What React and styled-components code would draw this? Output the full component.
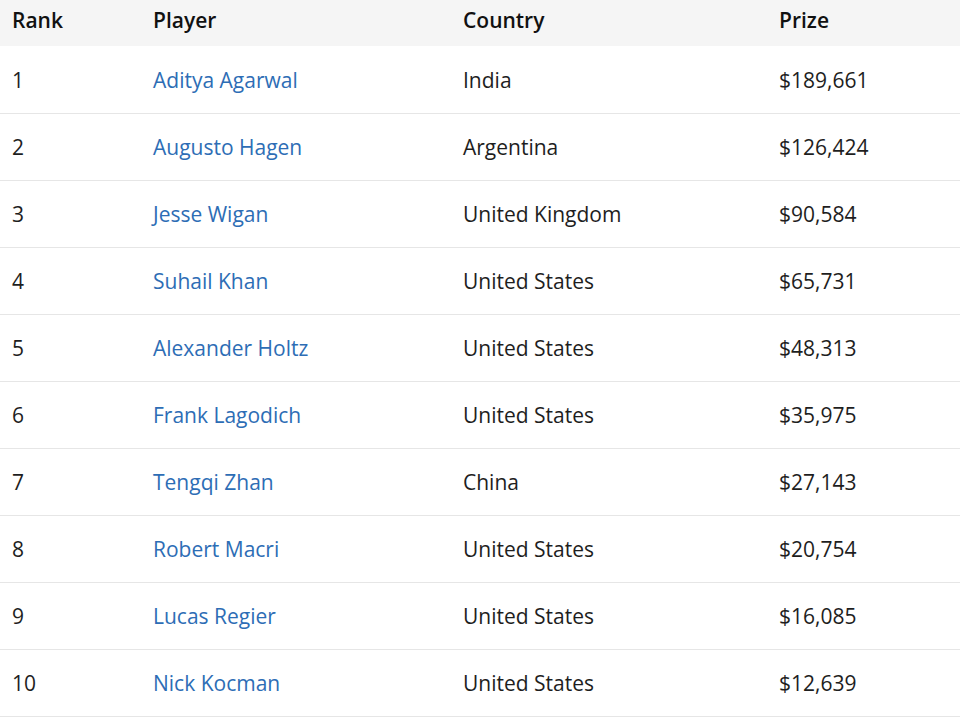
import React from "react";
import styled, { createGlobalStyle } from "styled-components";

const Global = createGlobalStyle`
  html, body { margin: 0; padding: 0; background: #fff; }
  body { font-family: "Open Sans", "Liberation Sans", sans-serif; }
`;

const Table = styled.table`
  width: 960px;
  border-collapse: collapse;
  table-layout: fixed;
  font-family: "Open Sans", "Liberation Sans", sans-serif;
  font-size: 21px;
  color: #1e1e1e;
`;

const Col = styled.col`
  width: ${(p) => p.$w}px;
`;

const HeadRow = styled.tr`
  background: #f5f5f5;
`;

const Th = styled.th`
  height: 46px;
  padding: 0 12px 6px;
  text-align: left;
  font-weight: 600;
  color: #111;
  vertical-align: middle;
  line-height: 28px;
  box-sizing: border-box;
`;

const Row = styled.tr`
  border-bottom: 1px solid #e6e6e6;
`;

const Td = styled.td`
  height: 67px;
  padding: 1px 12px 0;
  vertical-align: middle;
  line-height: 28px;
  box-sizing: border-box;
`;

const PlayerLink = styled.a`
  color: #2d6db5;
  text-decoration: none;
`;

const rows = [
  [1, "Aditya Agarwal", "India", "$189,661"],
  [2, "Augusto Hagen", "Argentina", "$126,424"],
  [3, "Jesse Wigan", "United Kingdom", "$90,584"],
  [4, "Suhail Khan", "United States", "$65,731"],
  [5, "Alexander Holtz", "United States", "$48,313"],
  [6, "Frank Lagodich", "United States", "$35,975"],
  [7, "Tengqi Zhan", "China", "$27,143"],
  [8, "Robert Macri", "United States", "$20,754"],
  [9, "Lucas Regier", "United States", "$16,085"],
  [10, "Nick Kocman", "United States", "$12,639"],
];

export default function App() {
  return (
    <>
      <Global />
      <Table>
        <colgroup>
          <Col $w={141} />
          <Col $w={310} />
          <Col $w={316} />
          <Col $w={193} />
        </colgroup>
        <thead>
          <HeadRow>
            <Th>Rank</Th>
            <Th>Player</Th>
            <Th>Country</Th>
            <Th>Prize</Th>
          </HeadRow>
        </thead>
        <tbody>
          {rows.map(([rank, name, country, prize]) => (
            <Row key={rank}>
              <Td>{rank}</Td>
              <Td>
                <PlayerLink href="#">{name}</PlayerLink>
              </Td>
              <Td>{country}</Td>
              <Td>{prize}</Td>
            </Row>
          ))}
        </tbody>
      </Table>
    </>
  );
}
